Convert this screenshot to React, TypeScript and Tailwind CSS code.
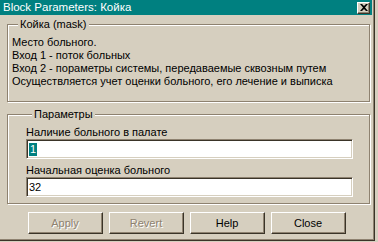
import React from "react";

const lines = [
  "Место больного.",
  "Вход 1 - поток больных",
  "Вход 2 - пораметры системы, передаваемые сквозным путем",
  "Осуществляется учет оценки больного, его лечение и выписка",
];

const Button: React.FC<{ label: string; disabled?: boolean }> = ({ label, disabled }) => (
  <button
    className={
      "w-[75px] h-[22px] flex items-center justify-center border-t border-l border-t-white border-l-white border-r border-b border-r-[#3a3428] border-b-[#3a3428] shadow-[inset_-1px_-1px_0_#8e8270] " +
      (disabled ? "text-[#8e8270] [text-shadow:1px_1px_0_white]" : "text-black")
    }
  >
    {label}
  </button>
);

const Field: React.FC<{ label: string; value: string; selected?: boolean }> = ({ label, value, selected }) => (
  <div className="flex flex-col">
    <div className="h-[13px] leading-[13px]">{label}</div>
    <div className="h-[20px] w-[327px] bg-white border-t border-l border-t-[#8e8270] border-l-[#8e8270] border-b border-r border-b-white border-r-white shadow-[inset_1px_1px_0_#3a3428,inset_-1px_-1px_0_#d6cfbf] flex items-center pl-[2px]">
      {selected ? (
        <span className="bg-[#008080] text-white leading-[13px] px-px">{value}</span>
      ) : (
        <span className="leading-[13px]">{value}</span>
      )}
    </div>
  </div>
);

export default function App() {
  return (
    <div className="w-[378px] h-[242px] bg-[#d6cfbf] overflow-hidden font-['Liberation_Sans',sans-serif] text-[11px] text-black">
      <div className="w-[375px] h-[241px] border-r border-b border-[#3a3428]">
        <div className="h-full border-r border-b border-[#8e8270] flex flex-col">
          {/* title bar */}
          <div className="h-[15px] mr-px bg-[#008080] flex items-center justify-between pl-[3px] pr-[2px]">
            <span className="text-white text-[11.5px] leading-[13px]">Block Parameters: Койка</span>
            <div className="w-[13px] h-[12px] bg-[#d6cfbf] border-t border-l border-white border-r border-b border-r-[#3a3428] border-b-[#3a3428] shadow-[inset_-1px_-1px_0_#8e8270] flex items-center justify-center">
              <svg width="8" height="7" viewBox="0 0 8 7">
                <path d="M0 0h2l2 2 2-2h2L5 3.5 8 7H6L4 5 2 7H0l3-3.5z" fill="black" />
              </svg>
            </div>
          </div>

          <fieldset className="mt-[3px] ml-[7px] w-[363px] border border-[#8e8270] shadow-[inset_1px_1px_0_white,1px_1px_0_white] pt-[5px] pl-[4px] pb-[13px]">
            <legend className="ml-[6px] px-[2px] bg-[#d6cfbf] leading-[13px]">Койка (mask)</legend>
            {lines.map((l) => (
              <div key={l} className="h-[13px] leading-[13px] whitespace-nowrap">
                {l}
              </div>
            ))}
          </fieldset>

          <fieldset className="mt-[6px] ml-[7px] w-[363px] border border-[#8e8270] shadow-[inset_1px_1px_0_white,1px_1px_0_white] pt-[5px] pl-[18px] pb-[6px] flex flex-col gap-[5px]">
            <legend className="ml-[6px] px-[2px] bg-[#d6cfbf] leading-[13px]">Параметры</legend>
            <Field label="Наличие больного в палате" value="1" selected />
            <Field label="Начальная оценка больного" value="32" />
          </fieldset>

          <div className="mt-[8px] flex justify-center gap-[6px]">
            <Button label="Apply" disabled />
            <Button label="Revert" disabled />
            <Button label="Help" />
            <Button label="Close" />
          </div>
        </div>
      </div>
    </div>
  );
}
